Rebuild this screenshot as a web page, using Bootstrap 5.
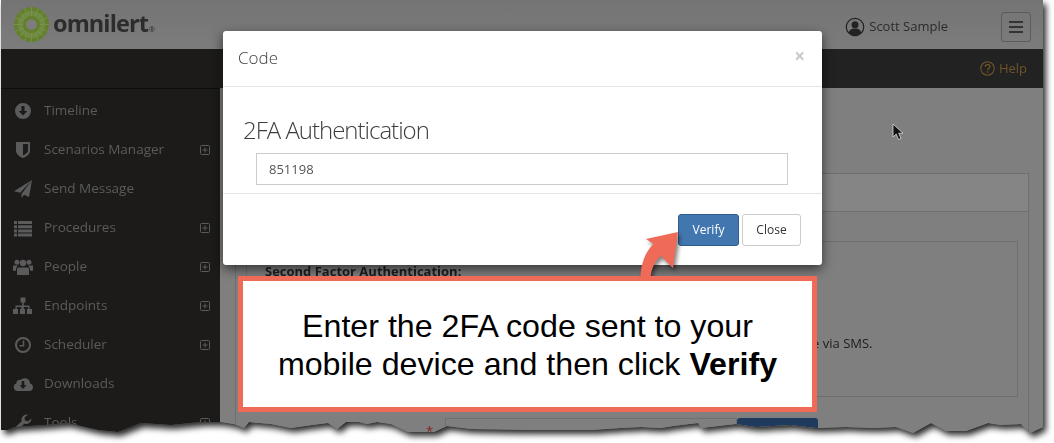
<!DOCTYPE html>
<html lang="en">
<head>
    <meta charset="UTF-8" />
    <meta name="viewport" content="width=device-width, initial-scale=1" />
    <title>Omnilert 2FA</title>
    <link href="https://cdn.jsdelivr.net/npm/bootstrap@5.3.3/dist/css/bootstrap.min.css" rel="stylesheet" />
    <style>
        html, body {
            height: 100%;
            overflow: hidden;
        }

        body {
            background: #fff;
            font-family: "Open Sans", sans-serif;
            font-size: 13px;
        }

        /* the torn edge and its shadow */
        .shot-shadow {
            width: 1043px;
            height: 443px;
            margin-left: 1px;
            position: relative;
            filter: drop-shadow(3px 4px 3px rgba(0, 0, 0, .85));
        }

        .shot {
            width: 1042px;
            height: 443px;
            background: #7f7f7f;
            clip-path: polygon(0 0, 100% 0, 100% 427px, 1029px 433px, 1020px 424px, 1000px 425px, 987px 423px, 965px 431px, 945px 431px, 930px 423px, 912px 433px, 895px 427px, 873px 428px, 845px 427px, 815px 428px, 790px 425px, 755px 427px, 735px 424px, 700px 428px, 697px 423px, 672px 426px, 660px 428px, 640px 427px, 620px 428px, 590px 430px, 560px 430px, 532px 430px, 470px 429px, 446px 426px, 433px 432px, 407px 432px, 390px 424px, 376px 422px, 366px 424px, 358px 422px, 345px 422px, 336px 429px, 327px 423px, 311px 425px, 290px 428px, 270px 424px, 248px 422px, 243px 428px, 233px 424px, 220px 422px, 200px 422px, 170px 425px, 140px 423px, 117px 432px, 97px 430px, 67px 423px, 44px 425px, 13px 427px, 7px 430px, 0 430px);
        }

        .top-head {
            height: 49px;
            background: linear-gradient(#747474, #7c7c7c);
        }

        .logo-mark {
            margin-left: 12px;
            margin-right: 3px;
        }

        .logo-text {
            font-family: "Open Sans", sans-serif;
            font-weight: 700;
            font-size: 23.5px;
            letter-spacing: -.9px;
            color: #2c2c2c;
            line-height: 1;
            margin-bottom: 2px;
        }

        .logo-text sup {
            font-size: 7px;
            font-weight: 400;
            top: 0;
            letter-spacing: 0;
            vertical-align: baseline;
            margin-left: 1px;
        }

        .user-area {
            padding-top: 5px;
        }

        .user-name {
            color: #2b2b2b;
            font-size: 13px;
        }

        .menu-btn {
            width: 30px;
            height: 30px;
            border: 1px solid #5c5c5c;
            border-radius: 3px;
            margin-left: 53px;
            margin-right: 12px;
        }

        .menu-btn span {
            display: block;
            width: 14px;
            height: 2px;
            background: #333;
            margin: 1.5px 0;
        }

        .side-col {
            width: 219px;
            background: #1c1b1a;
            color: #5b5b5b;
        }

        .side-top {
            height: 40px;
            margin-bottom: 2px;
            border-bottom: 1px solid #0d0d0d;
        }

        .side-item {
            height: 39px;
            padding-left: 12px;
            padding-right: 10px;
            font-size: 13.5px;
        }

        .side-item svg {
            flex: none;
        }

        .side-label {
            margin-left: 11px;
        }

        .main-col {
            background: #7f7f7f;
        }

        .help-bar {
            height: 39px;
            background: #222;
            color: #6f5428;
            padding-right: 16px;
            font-size: 13px;
        }

        .page-wrap {
            padding: 85px 14px 0 15px;
        }

        .bg-panel {
            border: 1px solid #6f6f6f;
            border-bottom: 0;
            padding: 0 10px;
        }

        .bg-panel-head {
            height: 38px;
            margin: 0 -10px 29px;
            border-bottom: 1px solid #6f6f6f;
            background: #858585;
        }

        .bg-box {
            height: 156px;
            border: 1px solid #6f6f6f;
            padding: 20px 18px;
            color: #1d1d1d;
            font-size: 13px;
        }

        .bg-box p {
            margin: 0;
            white-space: nowrap;
        }

        .bg-box-title {
            font-weight: 700;
            line-height: 18px;
            margin-bottom: 54px !important;
        }

        .bg-row {
            margin-top: 21px;
            padding-left: 180px;
        }

        .bg-star {
            color: #8b1a1a;
            width: 19px;
            padding-top: 4px;
        }

        .bg-input {
            width: 292px;
            height: 34px;
            border: 1px solid #6f6f6f;
        }

        .bg-btn {
            width: 81px;
            height: 34px;
            background: #1f3a5c;
            border-radius: 3px 3px 0 0;
        }

        /* dialog lying over the page */
        .code-dialog {
            position: absolute;
            left: 222px;
            top: 31px;
            width: 599px;
            height: 234px;
            background: #fff;
            border: 0;
            border-radius: 3px;
            box-shadow: 0 4px 12px rgba(0, 0, 0, .6);
        }

        .code-dialog .modal-header {
            height: 56px;
            padding: 0 17px 0 15px;
            border-bottom: 1px solid #e5e5e5;
            border-radius: 0;
        }

        .code-title {
            font-size: 17px;
            font-weight: 300;
            color: #3f3f3f;
            margin: 0;
        }

        .code-x {
            color: #c9c9c9;
            font-size: 19px;
            font-weight: 700;
            line-height: 1;
            margin-bottom: 5px;
        }

        .code-dialog .modal-body {
            height: 106px;
            flex: none;
            padding: 0 33px 0 20px;
        }

        .code-heading {
            font-family: "Open Sans", sans-serif;
            font-weight: 300;
            font-size: 24px;
            letter-spacing: -1px;
            color: #3d3d3d;
            line-height: 30px;
            margin: 28px 0 8px;
        }

        .code-input {
            margin-left: 13px;
            width: 532px;
            height: 32px;
            border: 1px solid #ccc;
            border-radius: 0;
            padding: 0 12px;
            font-size: 13px;
            color: #555;
            background: #fff;
            box-shadow: none;
        }

        .code-dialog .modal-footer {
            height: 72px;
            padding: 0 21px 0 0;
            border-top: 1px solid #e5e5e5;
            gap: 3px;
            border-radius: 0;
            flex-wrap: nowrap;
        }

        .code-dialog .modal-footer > * {
            margin: 0;
        }

        .act-btn {
            height: 32px;
            font-size: 12px;
            padding: 0;
            border-radius: 3px;
        }

        .act-verify {
            width: 61px;
            background: #4276ae;
            border: 1px solid #2e5c8e;
            color: #fff;
        }

        .act-close {
            width: 59px;
            background: #fff;
            border: 1px solid #ccc;
            color: #333;
        }

        /* the callout added on top of the screenshot */
        .callout {
            position: absolute;
            left: 237px;
            top: 276px;
            width: 579px;
            height: 136px;
            padding-top: 2px;
            border: 5px solid #f06a58;
            background: #fff;
            color: #000;
            font-family: "Liberation Sans", Arial, sans-serif;
            font-size: 32.2px;
            line-height: 38px;
            text-align: center;
        }

        .callout-arrow {
            position: absolute;
            left: 0;
            top: 0;
            filter: drop-shadow(2px 3px 2px rgba(0, 0, 0, .5));
        }

        .pointer {
            position: absolute;
            left: 891px;
            top: 123px;
        }
    </style>
</head>
<body>

    <svg width="0" height="0" class="position-absolute">
        <symbol id="plus-box" viewBox="0 0 10 10">
            <rect x=".5" y=".5" width="9" height="9" rx="1" fill="none" stroke="#5b5b5b" />
            <path d="M2.500 5h5M5 2.500v5" stroke="#5b5b5b" />
        </symbol>
    </svg>

    <div class="shot-shadow">
        <div class="shot d-flex flex-column">

            <!-- Header -->
            <header class="top-head d-flex align-items-center flex-shrink-0">
                <svg width="37" height="37" viewBox="0 0 38 38" class="logo-mark flex-shrink-0">
                    <circle cx="19" cy="19" r="18" fill="#64802f" />
                    <circle cx="19" cy="19" r="11.500" fill="none" stroke="#6f8a41" stroke-width="5" />
                    <g stroke="#7c9354" stroke-width=".8">
                        <path d="M19 1v36M1 19h36M6.300 6.300l25.400 25.400M31.700 6.300L6.300 31.700M12 2.500l14 33M26 2.500l-14 33M2.500 12l33 14M2.500 26l33-14" />
                    </g>
                    <circle cx="19" cy="19" r="8.500" fill="#64802f" />
                    <circle cx="19" cy="19" r="5.500" fill="#7d7d7d" />
                </svg>
                <div class="logo-text">omnilert<sup>®</sup></div>
                <div class="user-area ms-auto d-flex align-items-center">
                    <svg width="20" height="20" viewBox="0 0 20 20" class="me-1">
                        <circle cx="10" cy="10" r="8.700" fill="none" stroke="#222" stroke-width="1.200" />
                        <circle cx="10" cy="7.800" r="3.500" fill="#222" />
                        <path d="M3.800 16c.6-3.500 3-4.500 6.200-4.500s5.600 1 6.200 4.500c-3.400 3-9 3-12.400 0z" fill="#222" />
                    </svg>
                    <span class="user-name">Scott Sample</span>
                    <div class="menu-btn d-flex flex-column align-items-center justify-content-center">
                        <span></span><span></span><span></span>
                    </div>
                </div>
            </header>

            <div class="d-flex flex-grow-1">

                <!-- Sidebar -->
                <nav class="side-col flex-shrink-0">
                    <div class="side-top"></div>
                    <div class="side-item d-flex align-items-center">
                        <svg width="20" height="20" viewBox="0 0 20 20"><path fill="#5b5b5b" fill-rule="evenodd" d="M10 2a8 8 0 1 1 0 16a8 8 0 0 1 0-16zM8.500 5v5H5.700l4.300 4.600 4.300-4.600h-2.800V5z" /></svg>
                        <span class="side-label">Timeline</span>
                    </div>
                    <div class="side-item d-flex align-items-center">
                        <svg width="20" height="20" viewBox="0 0 20 20"><path fill="#5b5b5b" fill-rule="evenodd" d="M3 2h14v8.500c0 3.500-3.200 6-7 7.500-3.800-1.500-7-4-7-7.500zM10 4v11.500c2.700-1.200 5-3 5-5.300V4z" /></svg>
                        <span class="side-label flex-grow-1">Scenarios Manager</span>
                        <svg width="10" height="10"><use href="#plus-box" /></svg>
                    </div>
                    <div class="side-item d-flex align-items-center">
                        <svg width="20" height="20" viewBox="0 0 20 20"><path fill="#5b5b5b" d="M19 1l-3 17-5-2.200L8.500 19V15zM1 12.300L19 1 7.200 13.800z" /></svg>
                        <span class="side-label">Send Message</span>
                    </div>
                    <div class="side-item d-flex align-items-center">
                        <svg width="20" height="20" viewBox="0 0 20 20"><path fill="#5b5b5b" d="M1 3h3v3H1zM5 3h14v3H5zM1 7.200h3v3H1zM5 7.200h14v3H5zM1 11.400h3v3H1zM5 11.400h14v3H5zM1 15.600h3v3H1zM5 15.600h14v3H5z" /></svg>
                        <span class="side-label flex-grow-1">Procedures</span>
                        <svg width="10" height="10"><use href="#plus-box" /></svg>
                    </div>
                    <div class="side-item d-flex align-items-center">
                        <svg width="20" height="20" viewBox="0 0 20 20"><g fill="#5b5b5b"><circle cx="10" cy="6" r="3.200" /><circle cx="4" cy="5.200" r="2.500" /><circle cx="16" cy="5.200" r="2.500" /><path d="M5.500 10.500h9c1 0 1.500.8 1.500 2V18H4v-5.500c0-1.200.5-2 1.500-2zM0 8.500h3.800c.6 0 .8.300 1 .8-1 .5-1.800 1.500-1.800 3v1.500H0zM16.200 8.500H20v5.300h-3v-1.500c0-1.500-.8-2.500-1.800-3 .2-.5.400-.8 1-.8z" /></g></svg>
                        <span class="side-label flex-grow-1">People</span>
                        <svg width="10" height="10"><use href="#plus-box" /></svg>
                    </div>
                    <div class="side-item d-flex align-items-center">
                        <svg width="20" height="20" viewBox="0 0 20 20"><path fill="#5b5b5b" d="M7.500 1.500h5v5h-1.700v3h5.700v3.500h2.500v5h-5v-5h1.200v-2h-4.400v2h1.200v5h-5v-5h1.200v-2H3.800v2H5v5H0v-5h2.500V9.500h6.700v-3H7.500z" /></svg>
                        <span class="side-label flex-grow-1">Endpoints</span>
                        <svg width="10" height="10"><use href="#plus-box" /></svg>
                    </div>
                    <div class="side-item d-flex align-items-center">
                        <svg width="20" height="20" viewBox="0 0 20 20"><circle cx="10" cy="10" r="7" fill="none" stroke="#5b5b5b" stroke-width="2" /><path d="M10.500 5.500v5.200H6.500" fill="none" stroke="#5b5b5b" stroke-width="1.500" /></svg>
                        <span class="side-label flex-grow-1">Scheduler</span>
                        <svg width="10" height="10"><use href="#plus-box" /></svg>
                    </div>
                    <div class="side-item d-flex align-items-center">
                        <svg width="20" height="20" viewBox="0 0 20 20"><path fill="#5b5b5b" fill-rule="evenodd" d="M4.500 17A4 4 0 0 1 3.500 9.200 3 3 0 0 1 7.500 6 5.500 5.500 0 0 1 17 9.500 3.800 3.800 0 0 1 16 17zM8.700 7v4.200H6.500L10 15l3.500-3.800h-2.200V7z" /></svg>
                        <span class="side-label">Downloads</span>
                    </div>
                    <div class="side-item d-flex align-items-center">
                        <svg width="20" height="20" viewBox="0 0 20 20"><path fill="#5b5b5b" d="M18.500 5.500a5.500 5.500 0 0 1-7.300 5.200L4.800 17.500a2 2 0 0 1-3-2.700l6.900-6.500A5.500 5.500 0 0 1 15 1.500l-3.500 3 .5 3 3 .7z" /></svg>
                        <span class="side-label flex-grow-1">Tools</span>
                        <svg width="10" height="10"><use href="#plus-box" /></svg>
                    </div>
                </nav>

                <!-- Main content -->
                <main class="main-col flex-grow-1">
                    <div class="help-bar d-flex align-items-center justify-content-end">
                        <svg width="15" height="15" viewBox="0 0 15 15" class="me-1">
                            <circle cx="7.500" cy="7.500" r="6.700" fill="none" stroke="#6f5428" stroke-width="1.100" />
                            <path d="M5.200 5.800c0-3 4.800-3 4.800-.2 0 1.800-2.500 1.800-2.500 3.700" fill="none" stroke="#6f5428" stroke-width="1.300" />
                            <rect x="6.800" y="10.300" width="1.500" height="1.500" fill="#6f5428" />
                        </svg>
                        <span>Help</span>
                    </div>
                    <div class="page-wrap">
                        <div class="bg-panel">
                            <div class="bg-panel-head"></div>
                            <div class="bg-box">
                                <p class="bg-box-title">Second Factor Authentication:</p>
                                <p>Enter your mobile phone number below to receive a new second factor authentication code via SMS.</p>
                            </div>
                            <div class="bg-row d-flex">
                                <span class="bg-star">*</span>
                                <div class="bg-input"></div>
                                <div class="bg-btn"></div>
                            </div>
                        </div>
                    </div>
                </main>
            </div>
        </div>

        <!-- Dialog -->
        <div class="modal-content code-dialog">
            <div class="modal-header">
                <h5 class="code-title">Code</h5>
                <span class="code-x ms-auto">×</span>
            </div>
            <div class="modal-body">
                <h3 class="code-heading">2FA Authentication</h3>
                <input type="text" class="form-control code-input" value="851198" />
            </div>
            <div class="modal-footer">
                <button type="button" class="btn act-btn act-verify">Verify</button>
                <button type="button" class="btn act-btn act-close">Close</button>
            </div>
        </div>

        <!-- Callout -->
        <svg class="callout-arrow" width="1043" height="443" viewBox="0 0 1043 443">
            <path fill="#f06a58" d="M677 232L645 239 652.500 244C644 252 639.500 265 639.500 278H649.500C650 269 654 261 660 256L672 268z" />
        </svg>
        <div class="callout d-flex align-items-center justify-content-center">
            <div>Enter the 2FA code sent to your<br />mobile device and then click <b>Verify</b></div>
        </div>

        <!-- Mouse pointer -->
        <svg class="pointer" width="13" height="18" viewBox="0 0 13 18">
            <path d="M1 1v13l3.200-3 2.300 5.500 2.500-1-2.300-5.300H11z" fill="#111" stroke="#ddd" stroke-width=".8" />
        </svg>
    </div>

</body>
</html>
